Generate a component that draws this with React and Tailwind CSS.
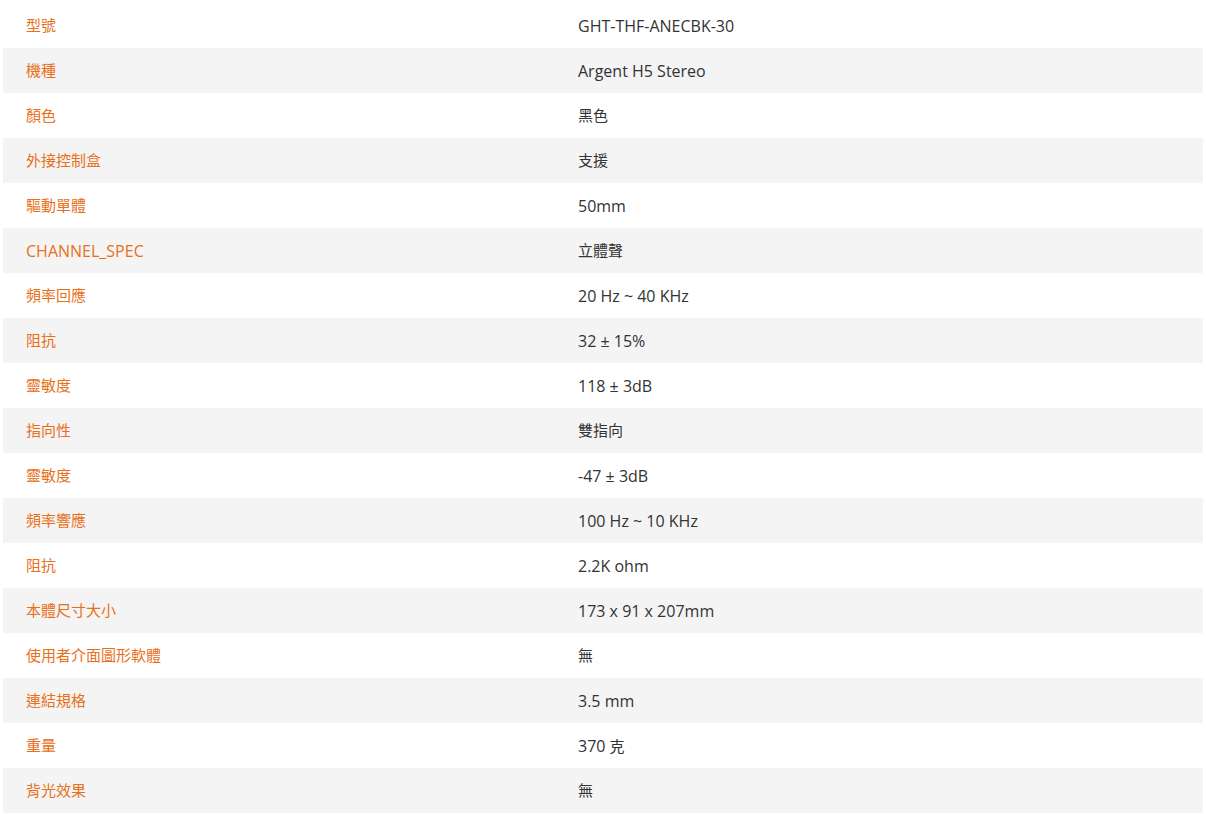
const specs = [
  ['型號', 'GHT-THF-ANECBK-30'],
  ['機種', 'Argent H5 Stereo'],
  ['顏色', '黑色'],
  ['外接控制盒', '支援'],
  ['驅動單體', '50mm'],
  ['CHANNEL_SPEC', '立體聲'],
  ['頻率回應', '20 Hz ~ 40 KHz'],
  ['阻抗', '32 ± 15%'],
  ['靈敏度', '118 ± 3dB'],
  ['指向性', '雙指向'],
  ['靈敏度', '-47 ± 3dB'],
  ['頻率響應', '100 Hz ~ 10 KHz'],
  ['阻抗', '2.2K ohm'],
  ['本體尺寸大小', '173 x 91 x 207mm'],
  ['使用者介面圖形軟體', '無'],
  ['連結規格', '3.5 mm'],
  ['重量', '370 克'],
  ['背光效果', '無'],
]

// latin runs render a touch larger than the CJK ones
function Mixed({ text }) {
  const parts = text.split(/([\u3000-\u9fff\uf900-\ufaff]+)/).filter(Boolean)
  return parts.map((p, i) =>
    /[\u3000-\u9fff\uf900-\ufaff]/.test(p) ? (
      <span key={i}>{p}</span>
    ) : (
      <span key={i} className="text-[16px]">{p}</span>
    )
  )
}

export default function App() {
  return (
    <div className="min-h-screen bg-white p-[3px] font-['Open_Sans','Noto_Sans_CJK_TC',sans-serif] text-[15px]">
      <div className="w-[1200px]">
        {specs.map(([label, value], i) => (
          <div
            key={i}
            className={`flex h-[45px] items-center ${i % 2 === 1 ? 'bg-[#f4f4f4]' : 'bg-white'}`}
          >
            <div className="w-[552px] pl-[23px] text-[#e8701a]">
              <Mixed text={label} />
            </div>
            <div className="flex-1 pl-[23px] text-[#333333]">
              <Mixed text={value} />
            </div>
          </div>
        ))}
      </div>
    </div>
  )
}
